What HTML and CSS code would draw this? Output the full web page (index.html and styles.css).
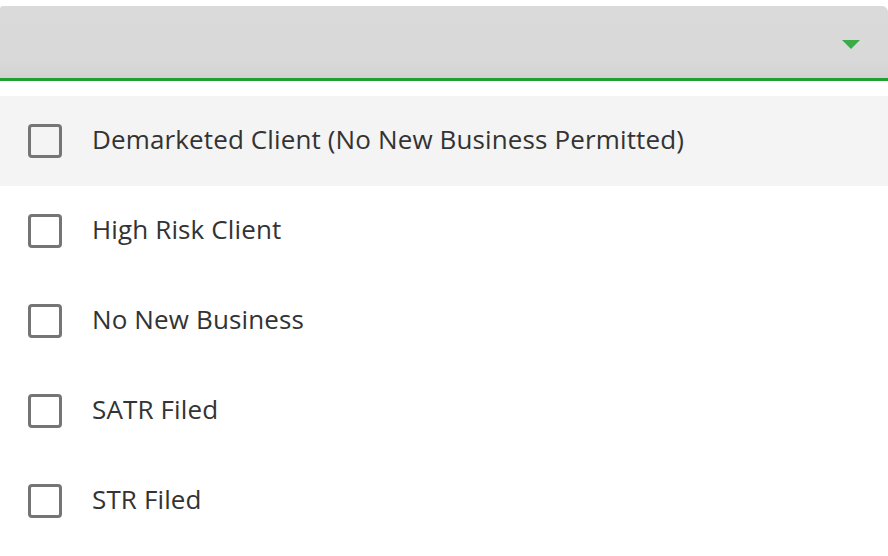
FILE: index.html
```html
<!DOCTYPE html>
<html>
<head>
<meta charset="utf-8">
<link rel="stylesheet" href="styles.css">
</head>
<body>
<div class="select">
  <div class="select-bar">
    <span class="arrow"></span>
  </div>
  <ul class="options">
    <li class="option hover"><span class="box"></span><span class="label">Demarketed Client (No New Business Permitted)</span></li>
    <li class="option"><span class="box"></span><span class="label">High Risk Client</span></li>
    <li class="option"><span class="box"></span><span class="label">No New Business</span></li>
    <li class="option"><span class="box"></span><span class="label">SATR Filed</span></li>
    <li class="option"><span class="box"></span><span class="label">STR Filed</span></li>
  </ul>
</div>
</body>
</html>
```
FILE: styles.css
```css
html, body {
  margin: 0;
  padding: 0;
  background: #ffffff;
  font-family: "Open Sans", "Liberation Sans", sans-serif;
}
.select {
  padding-top: 6px;
}
.select-bar {
  height: 72px;
  background: linear-gradient(to bottom, #dadada 0%, #d9d9d9 75%, #d3d3d3 100%);
  border-bottom: 3px solid #21a032;
  border-radius: 3px 6px 0 0;
  display: flex;
  align-items: center;
  justify-content: flex-end;
  padding-right: 28px;
}
.arrow {
  width: 0;
  height: 0;
  border-left: 9px solid transparent;
  border-right: 9px solid transparent;
  border-top: 9px solid #3bab47;
  margin-top: 4px;
}
.options {
  list-style: none;
  margin: 15px 0 0 0;
  padding: 0;
}
.option {
  height: 90px;
  display: flex;
  align-items: center;
  padding-left: 28px;
}
.option.hover {
  background: #f4f4f4;
}
.box {
  width: 28px;
  height: 28px;
  border: 3px solid #757575;
  border-radius: 4px;
  flex: none;
}
.label {
  margin-left: 30px;
  font-size: 26px;
  line-height: 36px;
  letter-spacing: 0.13px;
  color: #333333;
  position: relative;
  top: -2px;
}
```
